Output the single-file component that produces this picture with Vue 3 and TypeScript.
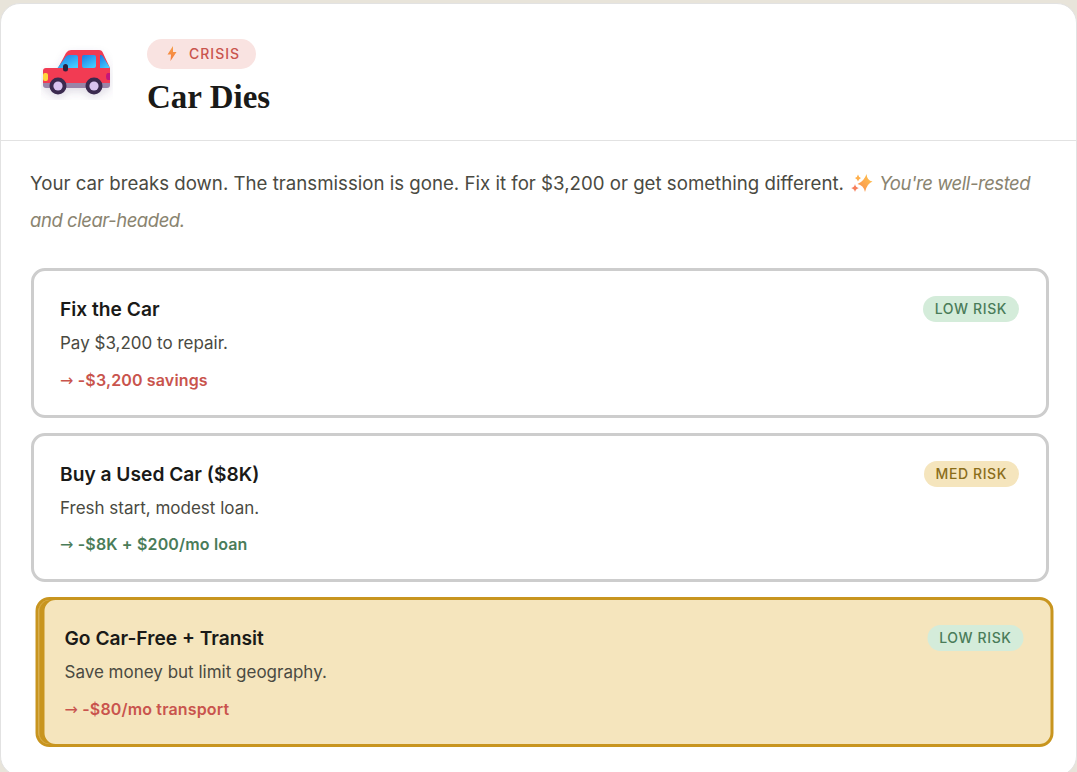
<script setup lang="ts">
interface Option {
  title: string
  desc: string
  effect: string
  effectTone: 'bad' | 'good'
  risk: string
  riskTone: 'low' | 'med'
  selected?: boolean
}

const options: Option[] = [
  { title: 'Fix the Car', desc: 'Pay $3,200 to repair.', effect: '-$3,200 savings', effectTone: 'bad', risk: 'LOW RISK', riskTone: 'low' },
  { title: 'Buy a Used Car ($8K)', desc: 'Fresh start, modest loan.', effect: '-$8K + $200/mo loan', effectTone: 'good', risk: 'MED RISK', riskTone: 'med' },
  { title: 'Go Car-Free + Transit', desc: 'Save money but limit geography.', effect: '-$80/mo transport', effectTone: 'bad', risk: 'LOW RISK', riskTone: 'low', selected: true },
]
</script>

<template>
  <div class="page">
    <main class="card">
      <header class="head">
        <svg class="car" viewBox="0 0 72 56" aria-hidden="true">
          <defs>
            <linearGradient id="glass" x1="0" y1="0" x2="0.7" y2="1">
              <stop offset="0" stop-color="#1b7ae4" />
              <stop offset="1" stop-color="#42ccff" />
            </linearGradient>
            <filter id="soft" x="-20%" y="-25%" width="140%" height="160%">
              <feDropShadow dx="0" dy="4" stdDeviation="4" flood-color="#5d4a78" flood-opacity="0.18" />
            </filter>
          </defs>
          <g filter="url(#soft)">
            <path d="M2 38h67v3q0 3-3 3H5q-3 0-3-3z" fill="#9a84a8" />
            <path d="M2 27q0-3 3-3h12L25 9q2-3 5-3h28q3 0 4 3l7 15v15H2z" fill="#f23a52" />
            <path d="M16.500 24 25 12.500q1.200-1.500 3-1.500h7q2 0 2 2v11z" fill="url(#glass)" />
            <rect x="41" y="11" width="14" height="13" rx="2" fill="url(#glass)" />
            <path d="M59 11h1q1.500 0 2 1.500L69 24H59z" fill="url(#glass)" />
            <rect x="22" y="20" width="5" height="7.500" rx="2.500" fill="#2b2140" />
            <rect x="2" y="29" width="5" height="8" rx="2" fill="#ffd53d" />
            <path d="M69 29h-2q-2 0-2 3.500t2 3.500h2z" fill="#c4187a" />
            <circle cx="17" cy="42" r="8.500" fill="#3a2a50" />
            <circle cx="17" cy="42" r="4.600" fill="#d9c3f0" />
            <circle cx="53" cy="42" r="8.500" fill="#3a2a50" />
            <circle cx="53" cy="42" r="4.600" fill="#d9c3f0" />
          </g>
        </svg>
        <div class="head-text">
          <span class="tag">
            <svg class="bolt" viewBox="0 0 10 15" aria-hidden="true">
              <defs>
                <linearGradient id="boltFill" x1="0.5" y1="0" x2="0.5" y2="1">
                  <stop offset="0" stop-color="#f7a04a" />
                  <stop offset="1" stop-color="#f47a3c" />
                </linearGradient>
              </defs>
              <path d="M6 0 .5 8.500H4L3.500 15 9.500 6H6z" fill="url(#boltFill)" />
            </svg>
            CRISIS
          </span>
          <h1 class="title">Car Dies</h1>
        </div>
      </header>

      <section class="body">
        <p class="intro">
          Your car breaks down. The transmission is gone. Fix it for $3,200 or get something different.
          <svg class="spark" viewBox="0 0 22 20" aria-hidden="true">
            <defs>
              <linearGradient id="sparkFill" x1="1" y1="0" x2="0" y2="1">
                <stop offset="0" stop-color="#ffc94f" />
                <stop offset="1" stop-color="#f98a4e" />
              </linearGradient>
            </defs>
            <path d="M15.500 1Q16 7.500 21.500 8.500 16 10.500 14 19 12.500 12 6.500 11 13 8.500 15.500 1z" fill="url(#sparkFill)" />
            <path d="M7 1.500Q7.500 4 10 5 7.500 6 7 8.500 6.500 6 4 5 6.500 4 7 1.500z" fill="#ffb04c" />
            <path d="M4 11Q4.500 14.500 7.800 15 4.500 16 4 19 3.500 16 .2 15 3.500 14.500 4 11z" fill="#f77f5a" />
          </svg>
          <em class="note">You're well-rested and clear-headed.</em>
        </p>

        <div class="options">
          <article v-for="opt in options" :key="opt.title" class="option" :class="{ selected: opt.selected }">
            <div class="option-top">
              <h2 class="option-title">{{ opt.title }}</h2>
              <span class="risk" :class="opt.riskTone">{{ opt.risk }}</span>
            </div>
            <p class="option-desc">{{ opt.desc }}</p>
            <p class="effect" :class="opt.effectTone"><span class="arrow">→</span> {{ opt.effect }}</p>
          </article>
        </div>
      </section>
    </main>
  </div>
</template>

<style>
html, body {
  margin: 0;
  background: #e8e4da;
}
</style>

<style scoped>
.page {
  box-sizing: border-box;
  height: 772px;
  padding-top: 3px;
  overflow: hidden;
  font-family: Inter, "Noto Sans", sans-serif;
  color: #1a1a18;
}
.card {
  box-sizing: border-box;
  height: 773px;
  background: #fff;
  border: 1px solid #e2e2e2;
  border-radius: 20px;
  overflow: hidden;
}
.head {
  box-sizing: border-box;
  height: 137px;
  display: flex;
  align-items: center;
  gap: 34px;
  padding-left: 40px;
  border-bottom: 1px solid #e2e2e2;
}
.car {
  width: 72px;
  height: 56px;
  flex: none;
}
.head-text {
  display: flex;
  flex-direction: column;
  align-items: flex-start;
  gap: 8px;
  margin-top: 11px;
}
.tag {
  display: inline-flex;
  align-items: center;
  gap: 12px;
  height: 30px;
  padding: 0 16px 0 20px;
  border-radius: 15px;
  background: #f9e3e1;
  color: #c9544d;
  font-size: 14px;
  font-weight: 500;
  letter-spacing: 1px;
}
.bolt {
  width: 10px;
  height: 15px;
}
.title {
  margin: 0;
  font-family: "Liberation Serif", serif;
  font-size: 33px;
  font-weight: 700;
  line-height: 40px;
}
.body {
  padding: 24px 27px 0 29px;
}
.intro {
  margin: 0 0 29px;
  font-size: 18.660px;
  line-height: 37px;
  color: #4a4a42;
}
.spark {
  width: 22px;
  height: 20px;
  vertical-align: -3px;
  margin: 0 6px 0 2px;
}
.note {
  color: #8a8470;
  font-size: 18.500px;
  letter-spacing: -0.45px;
}
.options {
  display: flex;
  flex-direction: column;
  gap: 15px;
  margin-left: 1px;
}
.option {
  box-sizing: border-box;
  height: 149.500px;
  padding: 25px 27px 24px 26px;
  background: #fff;
  border: 3px solid #cdcdcd;
  border-radius: 14px;
}
.option.selected {
  background: #f5e5bd;
  border-color: #c8951f;
  box-shadow: inset 1px 0 0 #d8ab46, inset 6px 0 0 #c8951f;
  transform: translateX(4.500px);
}
.option-top {
  display: flex;
  justify-content: space-between;
  align-items: center;
}
.option-title {
  margin: 0;
  font-size: 19.200px;
  font-weight: 600;
  line-height: 26px;
}
.risk {
  padding: 0 12px;
  height: 26px;
  line-height: 26px;
  border-radius: 13px;
  font-size: 14px;
  font-weight: 500;
  letter-spacing: 0.6px;
}
.risk.low {
  background: #d4ecda;
  color: #4a7c59;
}
.risk.med {
  background: #f5e5bd;
  color: #8a6d1a;
}
.option-desc {
  margin: 9px 0 0;
  font-size: 17px;
  line-height: 24px;
  color: #4a4a42;
}
.effect {
  margin: 13.500px 0 0;
  font-size: 16px;
  font-weight: 600;
  line-height: 22px;
  letter-spacing: 0.15px;
}
.arrow {
  font-family: "DejaVu Sans", sans-serif;
  font-weight: 400;
  font-size: 16px;
}
.effect.bad {
  color: #c9544d;
}
.effect.good {
  color: #4a7c59;
}
</style>
